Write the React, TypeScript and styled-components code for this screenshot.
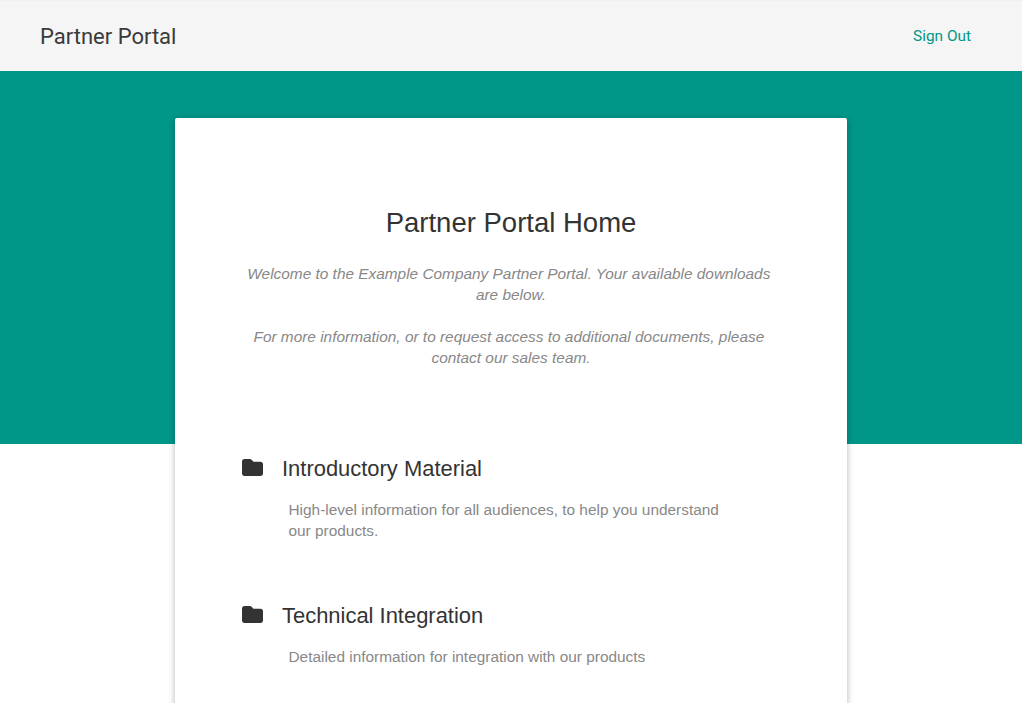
import * as React from "react";
import styled, { createGlobalStyle } from "styled-components";

const GlobalStyle = createGlobalStyle`
  html, body {
    margin: 0;
    padding: 0;
    background: #ffffff;
    height: 703px;
    overflow: hidden;
  }
`;

const Header = styled.header`
  display: flex;
  align-items: center;
  justify-content: space-between;
  box-sizing: border-box;
  height: 71px;
  padding: 0 51px 0 40px;
  background: #f5f5f5;
  border-top: 1px solid #f0f0f0;
`;

const Title = styled.div`
  font-family: Roboto, sans-serif;
  font-size: 22px;
  color: #3a3a3a;
`;

const SignOut = styled.a`
  font-family: Roboto, sans-serif;
  font-size: 15.4px;
  color: #009688;
  cursor: pointer;
`;

const Hero = styled.section`
  display: flex;
  justify-content: center;
  align-items: flex-start;
  box-sizing: border-box;
  height: 373px;
  padding-top: 47px;
  background: #009688;
`;

const Card = styled.main`
  box-sizing: border-box;
  flex: none;
  width: 672px;
  padding: 88px 67px 60px;
  background: #ffffff;
  border-radius: 2px;
  box-shadow: 0 2px 6px rgba(0, 0, 0, 0.3);
  font-family: "Liberation Sans", Arial, sans-serif;
`;

const Heading = styled.h1`
  margin: 0 0 23px;
  font-size: 27.5px;
  font-weight: 400;
  line-height: 34px;
  text-align: center;
  color: #333333;
`;

const Intro = styled.p`
  margin: 0 0 21px;
  font-size: 15.4px;
  font-style: italic;
  line-height: 21px;
  text-align: center;
  white-space: break-spaces;
  color: #888888;
`;

const Section = styled.section`
  margin-top: 60px;
  &:first-of-type {
    margin-top: 86px;
  }
`;

const SectionHead = styled.div`
  display: flex;
  align-items: center;
  gap: 19px;
  height: 30px;
`;

const FolderIcon = styled.svg`
  flex: none;
  width: 21px;
  height: 17px;
  margin-top: -3px;
  fill: #333333;
`;

const SectionTitle = styled.h2`
  margin: 0;
  font-size: 21.95px;
  font-weight: 400;
  line-height: 30px;
  color: #333333;
`;

const SectionText = styled.p`
  width: 440px;
  margin: 15px 0 0 46.5px;
  font-size: 15.4px;
  line-height: 21px;
  color: #888888;
`;

const Folder: React.FC = () => (
  <FolderIcon viewBox="0 0 21 17">
    <path d="M2.500 0h5.300c.7 0 1.300.3 1.800.8L11.500 2.700H18.500c1.400 0 2.500 1.100 2.500 2.500v9.300c0 1.400-1.100 2.500-2.500 2.500H2.500C1.100 17 0 15.900 0 14.500V2.500C0 1.100 1.100 0 2.500 0z" />
  </FolderIcon>
);

const sections = [
  {
    title: "Introductory Material",
    text: "High-level information for all audiences, to help you understand our products.",
  },
  {
    title: "Technical Integration",
    text: "Detailed information for integration with our products",
  },
];

export default function App() {
  return (
    <>
      <GlobalStyle />
      <Header>
        <Title>Partner Portal</Title>
        <SignOut>Sign Out</SignOut>
      </Header>
      <Hero>
        <Card>
          <Heading>Partner Portal Home</Heading>
          <Intro>
            Welcome to the Example Company Partner Portal. Your available downloads are below.
          </Intro>
          <Intro>
            For more information, or to request access to additional documents, please contact our
            sales team.
          </Intro>
          {sections.map((s) => (
            <Section key={s.title}>
              <SectionHead>
                <Folder />
                <SectionTitle>{s.title}</SectionTitle>
              </SectionHead>
              <SectionText>{s.text}</SectionText>
            </Section>
          ))}
        </Card>
      </Hero>
    </>
  );
}
